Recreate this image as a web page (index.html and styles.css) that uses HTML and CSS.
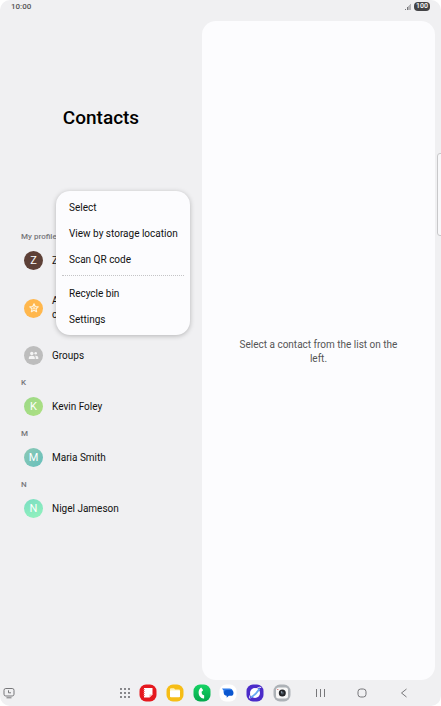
FILE: index.html
```
<!DOCTYPE html>
<html lang="en">
<head>
  <meta charset="UTF-8">
  <meta name="viewport" content="width=device-width, initial-scale=1.0">
  <title>Contacts</title>
  <link rel="stylesheet" href="styles.css">
</head>
<body>
  <div class="screen">
    <header class="status-bar">
      <span>10:00</span>
      <div class="status-icons">
        <svg width="7" height="8" viewBox="0 0 7 8" aria-hidden="true">
          <path d="M0 6h1v1H0zM2 4h1v3H2z" fill="#77777a"/>
          <path d="M3 3h1v4H3zM4 2h1v5H4zM5 1h1v6H5z" fill="#b5b5b8"/>
        </svg>
        <span class="battery">100</span>
      </div>
    </header>

    <main class="panes">
      <section class="contacts">
        <h1>Contacts</h1>

        <h2 class="label">My profile</h2>
        <a class="row" href="#profile"><span class="avatar brown">Z</span>Z</a>
        <a class="row favorites" href="#favorites">
          <span class="avatar orange">
            <svg width="12" height="12" viewBox="0 0 12 12" aria-hidden="true">
              <path d="M6 1.8l1.200 2.700 3 .3-2.200 2 .6 2.900L6 8.200 3.400 9.700 4 6.800l-2.200-2 3-.3z" fill="none" stroke="#fff3dc" stroke-width="1.200" stroke-linejoin="round"/>
              <path d="M6 4.800v2.600M4.700 6.100h2.600" stroke="#fff3dc" stroke-width=".9"/>
            </svg>
          </span>
          <span>A<br>c</span>
        </a>
        <a class="row" href="#groups">
          <span class="avatar grey">
            <svg width="11" height="11" viewBox="0 0 11 11" fill="#f4f4f4" aria-hidden="true">
              <circle cx="3.800" cy="3.500" r="1.700"/>
              <path d="M.8 9V8c0-1.400 1-2.200 3-2.200s3 .8 3 2.200v1z"/>
              <circle cx="7.700" cy="3.200" r="1.300"/>
              <path d="M7.700 9V7.800c0-.9-.3-1.500-.8-2 1.900-.4 3.400.3 3.400 1.900V9z"/>
            </svg>
          </span>
          Groups
        </a>

        <h2 class="label">K</h2>
        <a class="row" href="#kevin"><span class="avatar green">K</span>Kevin Foley</a>
        <h2 class="label">M</h2>
        <a class="row" href="#maria"><span class="avatar teal">M</span>Maria Smith</a>
        <h2 class="label">N</h2>
        <a class="row" href="#nigel"><span class="avatar mint">N</span>Nigel Jameson</a>

        <div class="menu">
          <button>Select</button>
          <button>View by storage location</button>
          <button>Scan QR code</button>
          <hr>
          <button>Recycle bin</button>
          <button>Settings</button>
        </div>
      </section>

      <section class="detail">
        <p>Select a contact from the list on the left.</p>
      </section>
    </main>

    <nav class="taskbar">
      <button class="dock-toggle" aria-label="Recent screen">
        <svg width="12" height="12" viewBox="0 0 12 12" fill="none" stroke="#77777a" aria-hidden="true">
          <rect x="1" y="1.500" width="10" height="7.500" rx="1.800"/>
          <path d="M5.500 3.300v2.500H8M3.500 10.800h5"/>
        </svg>
      </button>

      <button class="all-apps" aria-label="All apps">
        <svg width="10" height="10" viewBox="0 0 10 10" fill="#55555a" aria-hidden="true">
          <circle cx="1" cy="1" r=".9"/><circle cx="5" cy="1" r=".9"/><circle cx="9" cy="1" r=".9"/>
          <circle cx="1" cy="5" r=".9"/><circle cx="5" cy="5" r=".9"/><circle cx="9" cy="5" r=".9"/>
          <circle cx="1" cy="9" r=".9"/><circle cx="5" cy="9" r=".9"/><circle cx="9" cy="9" r=".9"/>
        </svg>
      </button>

      <div class="apps">
        <button aria-label="Notes">
          <svg width="18" height="18" viewBox="0 0 18 18">
            <rect x=".5" y=".5" width="17" height="17" rx="6.500" fill="#e5191f"/>
            <path d="M5 4h8.500v6.500L10.500 13.500H5z" fill="#fff"/>
            <path d="M13.500 10.500h-3v3z" fill="#ffb3b0"/>
            <path d="M4 5.500h2M4 7.500h2M4 9.500h2M4 11.500h2" stroke="#f3615f" stroke-width=".7"/>
          </svg>
        </button>
        <button aria-label="My Files">
          <svg width="18" height="18" viewBox="0 0 18 18">
            <rect x=".5" y=".5" width="17" height="17" rx="6.500" fill="#f6bd16"/>
            <path d="M4 5.200q0-1 1-1h3l1.200 1.200H13q1 0 1 1V12q0 1-1 1H5q-1 0-1-1z" fill="#fff2b8"/>
            <rect x="4" y="6.500" width="10" height="6.700" rx="1" fill="#fff"/>
          </svg>
        </button>
        <button aria-label="Phone">
          <svg width="18" height="18" viewBox="0 0 18 18">
            <defs>
              <linearGradient id="phone" x1="0" y1="0" x2="0" y2="1">
                <stop offset="0" stop-color="#16d364"/>
                <stop offset="1" stop-color="#04a84c"/>
              </linearGradient>
            </defs>
            <rect x=".5" y=".5" width="17" height="17" rx="6.500" fill="url(#phone)"/>
            <path d="M8.200 3.400l1.700 2.300q.3.700-.3 1.200l-.9.700q-.3 1.600.6 3l1.100.3q.8.200.8.900l-.1 2.600q-2.500.5-4.200-1.900C4.900 9.600 5.300 5 8.200 3.400z" fill="#fff"/>
          </svg>
        </button>
        <button aria-label="Messages">
          <svg width="18" height="18" viewBox="0 0 18 18">
            <rect x=".5" y=".5" width="17" height="17" rx="6.500" fill="#fff"/>
            <path d="M3 4.500h7.500q3.200 0 3.200 3.200t-3.200 3.200H7.700q-3.200 0-3.200-3.200V6.500z" fill="#2f7bea"/>
            <path d="M8 6h3.500q3 0 3 2.900t-3 2.900h-1.700l-2.100 2v-2.100Q5 11.500 5 8.900T8 6z" fill="#0b57d0"/>
          </svg>
        </button>
        <button aria-label="Internet">
          <svg width="18" height="18" viewBox="0 0 18 18">
            <rect x=".5" y=".5" width="17" height="17" rx="6.500" fill="#4b2cc9"/>
            <circle cx="9" cy="9" r="5" fill="#fff"/>
            <path d="M4 14.500C2.300 13.500 5 9.500 8.300 6.500S14.700 2.300 15 4" fill="none" stroke="#fff" stroke-width="1"/>
            <path d="M4.500 13.500Q7.500 12 10 9.300T13.500 4.500" fill="none" stroke="#67a9f3" stroke-width="1.800"/>
          </svg>
        </button>
        <button aria-label="Camera">
          <svg width="18" height="18" viewBox="0 0 18 18">
            <rect x=".5" y=".5" width="17" height="17" rx="6.500" fill="#adb2b7"/>
            <rect x="3" y="3.500" width="12" height="11" rx="2.500" fill="#f8f8f8"/>
            <circle cx="9.300" cy="9" r="3.500" fill="#222428"/>
            <circle cx="9.300" cy="9" r="1.500" fill="#4d5963"/>
            <circle cx="8.500" cy="8" r=".7" fill="#a9bac8"/>
            <circle cx="4.800" cy="5.500" r=".6" fill="#d34b43"/>
          </svg>
        </button>
      </div>

      <div class="keys">
        <button aria-label="Recents">
          <svg width="10" height="10" viewBox="0 0 10 10" stroke="#77777a"><path d="M1.500 1v8M5.500 1v8M9.500 1v8"/></svg>
        </button>
        <button aria-label="Home">
          <svg width="10" height="10" viewBox="0 0 10 10" fill="none" stroke="#77777a"><rect x="1" y="1" width="8" height="8" rx="2.700"/></svg>
        </button>
        <button aria-label="Back">
          <svg width="10" height="10" viewBox="0 0 10 10" fill="none" stroke="#77777a"><path d="M7.500 1L2.500 5l5 4"/></svg>
        </button>
      </div>
    </nav>

    <div class="edge-handle"></div>
  </div>
</body>
</html>
```

FILE: styles.css
```
* {
  box-sizing: border-box;
}

body {
  margin: 0;
  background-color: #fff;
  font-family: Roboto, sans-serif;
  font-size: 10px;
  color: #111;
}

button {
  padding: 0;
  border: none;
  background: none;
  font: inherit;
  color: inherit;
  cursor: pointer;
}

svg {
  display: block;
}

.screen {
  position: relative;
  display: flex;
  flex-direction: column;
  min-height: 100vh;
  border-radius: 10px;
  background-color: #f0f0f2;
  overflow: hidden;
}

/* Status bar */
.status-bar {
  display: flex;
  justify-content: space-between;
  padding: 0 11px 8px;
  line-height: 13px;
  font-size: 8px;
  font-weight: 500;
  color: #555;
}

.status-icons {
  display: flex;
  align-items: center;
  gap: 2px;
}

.battery {
  padding: 0 2px;
  border-radius: 4px;
  background-color: #444447;
  color: #fff;
  font-size: 7px;
  font-weight: 500;
  line-height: 9px;
}

/* Two panes */
.panes {
  flex: 1;
  display: grid;
  grid-template-columns: 13fr 15fr;
  padding-right: 6px;
}

.contacts {
  position: relative;
}

h1 {
  margin: 0;
  padding: 85px 0 93px;
  line-height: 24px;
  font-size: 19px;
  font-weight: 500;
  text-align: center;
  color: #000;
}

.label {
  margin: 0;
  padding: 4px 0 0 21px;
  line-height: 20px;
  font-size: 8px;
  font-weight: 500;
  color: #77777a;
}

.row {
  display: flex;
  align-items: center;
  gap: 9px;
  height: 27px;
  padding-left: 24px;
  line-height: 14px;
  color: inherit;
  text-decoration: none;
}

.favorites {
  height: 68px;
}

.avatar {
  display: flex;
  align-items: center;
  justify-content: center;
  width: 19px;
  height: 19px;
  border-radius: 50%;
  font-size: 11px;
  color: #fff;
}

.brown {
  background-color: #5d4037;
}

.orange {
  background-color: #ffb74d;
}

.grey {
  background-color: #bdbdbd;
}

.green {
  background: linear-gradient(135deg, #9bd987, #aee082);
}

.teal {
  background: linear-gradient(135deg, #8cc9b5, #66bfbc);
}

.mint {
  background: linear-gradient(160deg, #7addc2, #93f3bd);
}

/* Popup menu */
.menu {
  position: absolute;
  top: 170px;
  left: 56px;
  right: 12px;
  padding: 4px 0 2px;
  border-radius: 14px;
  background-color: #fcfcfe;
  box-shadow: 0 1px 5px rgba(0, 0, 0, 0.25);
}

.menu button {
  display: block;
  width: 100%;
  padding-left: 13px;
  line-height: 26px;
  text-align: left;
  white-space: nowrap;
}

.menu hr {
  margin: 2px 6px 5px;
  border: none;
  border-top: 1px dotted #c4c4c6;
}

/* Detail pane */
.detail {
  display: flex;
  align-items: center;
  justify-content: center;
  padding: 2px 32px 0;
  border-radius: 14px;
  background-color: #fcfcfe;
  text-align: center;
  color: #555;
}

.detail p {
  margin: 0;
  line-height: 14px;
}

/* Taskbar */
.taskbar {
  display: flex;
  align-items: center;
  height: 26px;
  padding: 0 16px 0 3px;
}

.dock-toggle {
  margin-right: auto;
}

.all-apps {
  display: flex;
  justify-content: center;
  width: 20px;
}

.apps {
  display: grid;
  grid-template-columns: repeat(6, 1fr);
  width: 160px;
  margin-right: 4px;
}

.keys {
  display: grid;
  grid-template-columns: repeat(3, 42px);
}

.apps button,
.keys button {
  display: flex;
  justify-content: center;
}

/* Edge panel handle, partly off screen */
.edge-handle {
  position: absolute;
  top: 153px;
  right: -4px;
  width: 8px;
  height: 83px;
  border: 1px solid #c8c8ca;
  border-radius: 3px;
  background-color: #f8f8fa;
}
```
